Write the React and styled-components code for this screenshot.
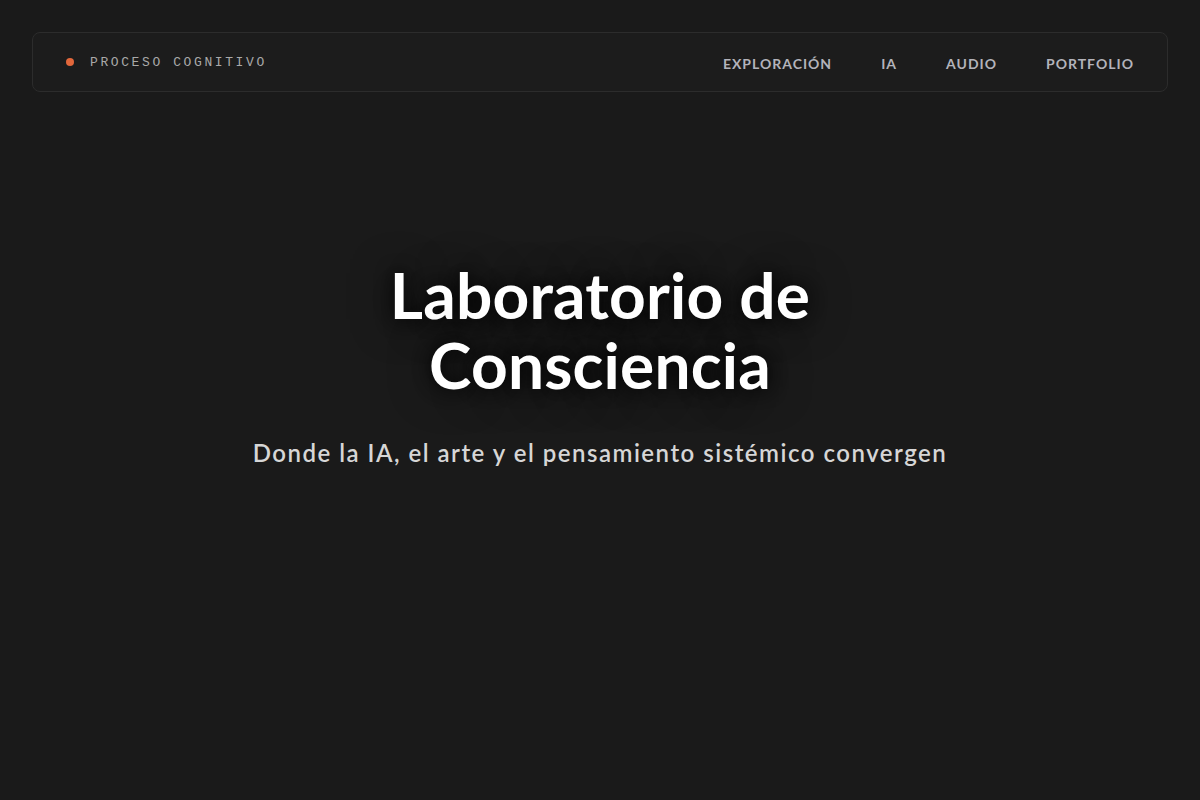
import React from 'react'
import styled, { createGlobalStyle } from 'styled-components'

const GlobalStyle = createGlobalStyle`
  html, body {
    margin: 0;
    padding: 0;
    background: #1a1a1a;
  }
  body {
    font-family: Lato, "Open Sans", sans-serif;
    -webkit-font-smoothing: antialiased;
  }
`

const Page = styled.div`
  min-height: 800px;
  box-sizing: border-box;
  padding: 32px;
  background: #1a1a1a;
  display: flex;
  flex-direction: column;
`

const NavBar = styled.header`
  display: flex;
  align-items: center;
  justify-content: space-between;
  height: 60px;
  box-sizing: border-box;
  padding: 0 33px 0 32px;
  border: 1px solid #2c2c2c;
  border-radius: 8px;
  background: #1c1c1c;
`

const Brand = styled.div`
  display: flex;
  align-items: center;
  gap: 16px;
`

const Dot = styled.span`
  width: 8px;
  height: 8px;
  border-radius: 50%;
  background: #e2673b;
  margin-left: 1px;
`

const BrandText = styled.span`
  font-family: "Liberation Mono", "DejaVu Sans Mono", monospace;
  font-size: 13px;
  letter-spacing: 2.6px;
  color: #a9a9a9;
`

const NavLinks = styled.nav`
  display: flex;
  align-items: center;
  gap: 49px;
`

const NavLink = styled.a`
  font-size: 14px;
  font-weight: 700;
  letter-spacing: 1px;
  color: #b3b3ba;
  text-decoration: none;
  text-transform: uppercase;
  cursor: pointer;
  margin-top: 2px;
`

const Hero = styled.main`
  display: flex;
  flex-direction: column;
  align-items: center;
  text-align: center;
  padding-top: 168px;
`

const Title = styled.h1`
  margin: 0;
  font-size: 64px;
  font-weight: 700;
  line-height: 70px;
  color: #ffffff;
  letter-spacing: 0.2px;
  text-shadow: 0 0 18px rgba(0, 0, 0, 0.9), 0 0 40px rgba(0, 0, 0, 0.6);
`

const Subtitle = styled.p`
  margin: 38px 0 0;
  font-size: 24px;
  font-weight: 600;
  letter-spacing: 1.5px;
  color: #d6d6d6;
`

const links = ['Exploración', 'IA', 'Audio', 'Portfolio']

export default function App() {
  return (
    <>
      <GlobalStyle />
      <Page>
        <NavBar>
          <Brand>
            <Dot />
            <BrandText>PROCESO COGNITIVO</BrandText>
          </Brand>
          <NavLinks>
            {links.map(l => (
              <NavLink key={l}>{l}</NavLink>
            ))}
          </NavLinks>
        </NavBar>
        <Hero>
          <Title>
            Laboratorio de
            <br />
            Consciencia
          </Title>
          <Subtitle>Donde la IA, el arte y el pensamiento sistémico convergen</Subtitle>
        </Hero>
      </Page>
    </>
  )
}
